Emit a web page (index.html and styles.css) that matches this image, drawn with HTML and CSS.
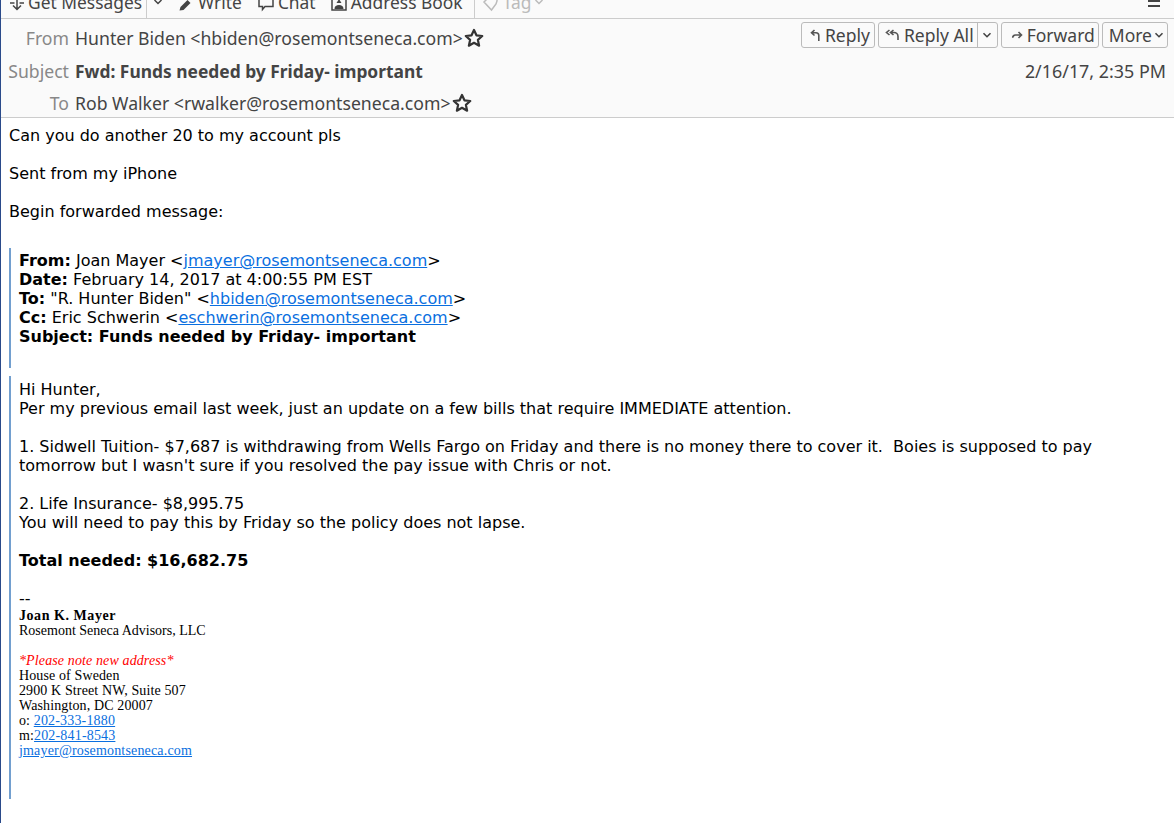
FILE: index.html
```html
<!DOCTYPE html>
<html>
	<head>
		<meta charset="utf-8" />
		<title>Fwd: Funds needed by Friday- important</title>
		<link rel="stylesheet" href="styles.css">
	</head>
	<body>
		<div id="toolbar">
			<span class="tool first"><svg class="tool-icon" viewBox="0 0 16 16"><path d="M8 -2v11M4 5.500 8 9.500 12 5.500M1 3h4.500M10.500 3H15" /></svg>Get Messages</span>
			<span class="tool-sep"></span>
			<svg class="tool-drop" viewBox="0 0 10 10"><path d="M1.500 3 5 6.500 8.500 3" /></svg>
			<span class="tool"><svg class="tool-icon" viewBox="0 0 16 16"><path class="solid" d="M1.500 10.500l1-3.500 7-7 3 3-7 7z" /></svg>Write</span>
			<span class="tool chat"><svg class="tool-icon" viewBox="0 0 16 16"><path d="M1 -2h14v8.500h-8l-2.500 3v-3h-3.500z" /></svg>Chat</span>
			<span class="tool"><svg class="tool-icon" viewBox="0 0 16 16"><path d="M1 -2h14v12h-14z" /><path class="solid" d="M3.500 9c0-3 2-4 4.500-4s4.500 1 4.500 4zM8 -1l2.500 4h-5z" /></svg>Address Book</span>
			<span class="tool-sep tag-sep"></span>
			<span class="tool disabled"><svg class="tool-icon" viewBox="0 0 16 16"><path d="M1 2 5 -2h9v3l-1 3L8.500 10z" /></svg>Tag<svg class="tool-drop" viewBox="0 0 10 10"><path d="M1.500 3 5 6.500 8.500 3" /></svg></span>
			<span class="tool-menu"></span>
		</div>
		<div id="header">
			<div class="fields">
				<div class="field">
					<span class="label">From</span>
					<span class="value">Hunter Biden &lt;hbiden@rosemontseneca.com&gt;</span>
					<svg class="star" viewBox="0 0 18 18"><path d="M9 1.800 11.200 6.600 16.400 7.200 12.500 10.700 13.600 15.900 9 13.300 4.400 15.900 5.500 10.700 1.600 7.200 6.800 6.600z" /></svg>
				</div>
				<div class="field">
					<span class="label">Subject</span>
					<span class="value subject">Fwd: Funds needed by Friday- important</span>
				</div>
				<div class="field">
					<span class="label">To</span>
					<span class="value">Rob Walker &lt;rwalker@rosemontseneca.com&gt;</span>
					<svg class="star" viewBox="0 0 18 18"><path d="M9 1.800 11.200 6.600 16.400 7.200 12.500 10.700 13.600 15.900 9 13.300 4.400 15.900 5.500 10.700 1.600 7.200 6.800 6.600z" /></svg>
				</div>
			</div>
			<div class="side">
				<div class="buttons">
					<span class="button reply-btn"><svg class="btn-icon" viewBox="0 0 12 12"><path d="M5.500 1 2.500 3.800 5.500 6.500M2.500 3.800H7a2.800 2.800 0 0 1 2.800 2.800V12" /></svg>Reply</span>
					<span class="button split"><span class="split-main"><svg class="btn-icon wide" viewBox="0 0 15 12"><path d="M4.500 1 1.500 3.500 4.500 6M8.500 1 5.500 3.500 8.500 6M5.500 3.500H9a4 4 0 0 1 4 4V11" /></svg>Reply All</span><span class="split-drop"><svg class="btn-drop" viewBox="0 0 10 10"><path d="M1.500 3.200 5 6.700 8.500 3.200" /></svg></span></span>
					<span class="button forward-btn"><svg class="btn-icon" viewBox="0 0 12 12"><path d="M7.500 3 10.500 6 7.500 9M10.500 6H4.500A2.800 2.800 0 0 0 1.700 8.800" /></svg>Forward</span>
					<span class="button more">More<svg class="btn-drop" viewBox="0 0 10 10"><path d="M1.500 3.200 5 6.700 8.500 3.200" /></svg></span>
				</div>
				<div class="date">2/16/17, 2:35 PM</div>
			</div>
		</div>
		<div id="message">
			<p class="line">Can you do another 20 to my account pls</p>
			<p class="line gap">Sent from my iPhone</p>
			<p class="line gap">Begin forwarded message:</p>
			<blockquote class="quote forward">
				<div class="line"><b>From:</b> Joan Mayer &lt;<a href="#">jmayer@rosemontseneca.com</a>&gt;</div>
				<div class="line"><b>Date:</b> February 14, 2017 at 4:00:55 PM EST</div>
				<div class="line"><b>To:</b> "R. Hunter Biden" &lt;<a href="#">hbiden@rosemontseneca.com</a>&gt;</div>
				<div class="line"><b>Cc:</b> Eric Schwerin &lt;<a href="#">eschwerin@rosemontseneca.com</a>&gt;</div>
				<div class="line"><b>Subject: Funds needed by Friday- important</b></div>
			</blockquote>
			<blockquote class="quote body-quote">
				<div class="line">Hi Hunter,</div>
				<div class="line">Per my previous email last week, just an update on a few bills that require IMMEDIATE attention.</div>
				<div class="line gap">1. Sidwell Tuition- $7,687 is withdrawing from Wells Fargo on Friday and there is no money there to cover it.&nbsp; Boies is supposed to pay tomorrow but I wasn't sure if you resolved the pay issue with Chris or not.</div>
				<div class="line gap">2. Life Insurance- $8,995.75</div>
				<div class="line">You will need to pay this by Friday so the policy does not lapse.</div>
				<div class="line gap"><b>Total needed: $16,682.75</b></div>
				<div class="line gap">--</div>
				<div class="sig">
					<div><b>Joan K. Mayer</b></div>
					<div class="firm">Rosemont Seneca Advisors, LLC</div>
					<div class="sig-gap note">*Please note new address*</div>
					<div>House of Sweden</div>
					<div>2900 K Street NW, Suite 507</div>
					<div>Washington, DC 20007</div>
					<div>o: <a href="#">202-333-1880</a></div>
					<div>m:<a href="#">202-841-8543</a></div>
					<div><a href="#">jmayer@rosemontseneca.com</a></div>
				</div>
			</blockquote>
		</div>
	</body>
</html>
```

FILE: styles.css
```css
body {
	margin: 0; padding: 0;
	height: 823px;
	overflow: hidden;
	box-sizing: border-box;
	border-left: 1px solid #2a4a8a;
	background-color: #fff;
	font: 16px "DejaVu Sans", sans-serif;
	color: #000;
}
a:link, a:visited {
	color: #0a6fe0;
	text-decoration: underline;
}

#toolbar {
	display: flex;
	align-items: flex-start;
	height: 19px;
	box-sizing: border-box;
	overflow: hidden;
	border-bottom: 1px solid #ccc;
	background-color: #fafafa;
	font: 17.4px/16px "Noto Sans", sans-serif;
	color: #444;
}
.tool {
	display: flex;
	align-items: center;
	height: 10px;
	margin-top: -3px;
	margin-right: 16px;
	white-space: nowrap;
}
.tool.first {
	margin-left: 8px;
	margin-right: 4px;
}
.tool.chat {
	margin-right: 15px;
}
.tool.disabled {
	color: #bbb;
}
.tool-icon {
	flex: none;
	width: 16px; height: 16px;
	margin-right: 4px;
	margin-top: 12px;
	fill: none;
	stroke: currentColor;
	stroke-width: 1.500;
	overflow: visible;
}
.tool-icon .solid {
	fill: currentColor;
	stroke: none;
}
.tool.first .tool-icon {
	margin-right: 3px;
}
.tool-sep {
	flex: none;
	width: 1px; height: 18px;
	background-color: #ccc;
	margin-right: 6px;
}
.tag-sep {
	margin-left: -5px;
	margin-right: 8px;
}
.tool-drop {
	flex: none;
	width: 10px; height: 10px;
	margin: -3px 15px 0 0;
	fill: none;
	stroke: currentColor;
	stroke-width: 1.500;
}
.tool.disabled .tool-drop {
	margin: 0 0 0 3px;
}
.tool-menu {
	margin: 0 14px 0 auto;
	width: 12px; height: 3px;
	border-top: 2px solid #444;
	border-bottom: 2px solid #444;
}

#header {
	display: flex;
	justify-content: space-between;
	height: 99px;
	box-sizing: border-box;
	padding: 3px 6px 0 0;
	border-bottom: 1px solid #ccc;
	background-color: #fafafa;
	font: 17.65px "Noto Sans", sans-serif;
	color: #444;
}
.fields {
	display: flex;
	flex-direction: column;
}
.field {
	flex: none;
	display: flex;
	align-items: center;
	height: 32.500px;
}
.label {
	width: 68px;
	margin-right: 6px;
	text-align: right;
	color: #888;
}
.subject {
	font-size: 17.4px;
	font-weight: bold;
}
.star {
	width: 20px; height: 20px;
	margin-left: 1px;
	fill: none;
	stroke: #333;
	stroke-width: 2;
	stroke-linejoin: round;
}
.side {
	display: flex;
	flex-direction: column;
	align-items: flex-end;
}
.buttons {
	display: flex;
	gap: 3px;
	font-size: 17.5px;
}
.button {
	display: flex;
	align-items: center;
	height: 26px;
	box-sizing: border-box;
	padding: 0 2px 0 7px;
	border: 1px solid #bbb;
	border-radius: 3px;
	background-color: #fafafa;
	white-space: nowrap;
}
.button.split {
	padding: 0;
}
.reply-btn {
	padding-right: 4px;
}
.forward-btn {
	padding: 0 3px 0 9px;
}
.more {
	padding: 0 3px 0 6px;
}
.split-main {
	display: flex;
	align-items: center;
	padding: 0 3px 0 6px;
	border-right: 1px solid #bbb;
	height: 100%;
}
.split-drop {
	display: flex;
	align-items: center;
	padding: 0 5px 0 4px;
}
.btn-icon {
	width: 12px; height: 12px;
	margin-right: 4px;
	fill: none;
	stroke: #555;
	stroke-width: 1.600;
}
.btn-icon.wide {
	width: 15px;
}
.btn-drop {
	width: 10px; height: 10px;
	margin-left: 2px;
	fill: none;
	stroke: #444;
	stroke-width: 1.600;
}
.split-drop .btn-drop {
	margin-left: 0;
}
.date {
	margin-top: 11px;
	margin-right: 2px;
	font-size: 17.9px;
}

#message {
	padding: 8px 8px 0 8px;
	line-height: 19px;
}
.line {
	margin: 0;
}
.gap {
	margin-top: 19px;
}
.quote {
	margin: 0;
	padding-left: 8px;
	border-left: 2px solid #729fcf;
}
.forward {
	margin-top: 27px;
	height: 120px;
	padding-top: 3px;
	box-sizing: border-box;
}
.body-quote {
	margin-top: 8px;
	height: 423px;
	padding-top: 4px;
	box-sizing: border-box;
}
.sig {
	font: 14px/15px "Liberation Serif", serif;
	letter-spacing: .12px;
}
.sig b {
	letter-spacing: .55px;
}
.sig a {
	letter-spacing: .17px;
}
.firm {
	letter-spacing: 0;
}
.sig-gap {
	margin-top: 15px;
}
.note {
	color: #f00;
	font-style: italic;
}
```
